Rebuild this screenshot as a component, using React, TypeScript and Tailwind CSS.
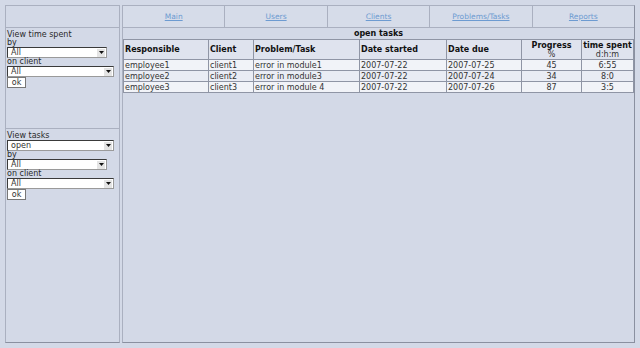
import React from 'react';

const tabs = ['Main', 'Users', 'Clients', 'Problems/Tasks', 'Reports'];

const rows = [
  { who: 'employee1', client: 'client1', task: 'error in module1', start: '2007-07-22', due: '2007-07-25', progress: '45', spent: '6:55' },
  { who: 'employee2', client: 'client2', task: 'error in module3', start: '2007-07-22', due: '2007-07-24', progress: '34', spent: '8:0' },
  { who: 'employee3', client: 'client3', task: 'error in module 4', start: '2007-07-22', due: '2007-07-26', progress: '87', spent: '3:5' },
];

function Select({ value, width }: { value: string; width: string }) {
  return (
    <div className={`flex h-[11px] items-center justify-between border border-[#3a3a3a] border-r-[#9a9a9a] border-b-[#9a9a9a] bg-white pl-[3px] pr-[1px] ${width}`}>
      <span className="leading-none text-[#333]">{value}</span>
      <span className="flex h-[8px] w-[8px] items-center justify-center bg-[#e4e4e4]">
        <svg width="5" height="3" viewBox="0 0 5 3">
          <path d="M0 0h5L2.5 3z" fill="#111" />
        </svg>
      </span>
    </div>
  );
}

function OkButton() {
  return (
    <div className="flex h-[11px] w-[19px] items-center justify-center border border-[#777] bg-white leading-none text-[#333]">
      ok
    </div>
  );
}

export default function App() {
  return (
    <div className="h-[348px] w-[640px] bg-[#d3d9e7] p-[5px] text-[8px] text-[#2a2a2a]" style={{ fontFamily: '"DejaVu Sans", sans-serif' }}>
      <div className="flex h-[338px] gap-[2px]">
        {/* Sidebar */}
        <div className="flex w-[116px] flex-col border border-[#aab0c0] border-b-[#8a90a0]">
          <div className="h-[22px] border-b border-[#aab0c0]" />
          <div className="flex h-[101px] flex-col border-b border-[#aab0c0] pl-[1px] pt-[2px]">
            <span className="leading-[9px]">View time spent</span>
            <span className="leading-[8px]">by</span>
            <Select value="All" width="w-[100px]" />
            <span className="leading-[8px]">on client</span>
            <Select value="All" width="w-[107px]" />
            <OkButton />
          </div>
          <div className="flex flex-col pl-[1px] pt-[3px]">
            <span className="leading-[8px]">View tasks</span>
            <Select value="open" width="w-[107px]" />
            <span className="leading-[8px]">by</span>
            <Select value="All" width="w-[100px]" />
            <span className="leading-[8px]">on client</span>
            <Select value="All" width="w-[107px]" />
            <OkButton />
          </div>
        </div>

        {/* Main */}
        <div className="flex flex-1 flex-col border border-[#aab0c0] border-b-[#8a90a0] border-r-[#8a90a0]">
          <div className="flex h-[22px] border-b border-[#aab0c0]">
            {tabs.map((t, i) => (
              <div
                key={t}
                className={`flex flex-1 items-center justify-center bg-[#d6dce9] ${i > 0 ? 'border-l border-[#aab0c0]' : ''}`}
              >
                <span className="text-[7.5px] text-[#6d9bd1] underline">{t}</span>
              </div>
            ))}
          </div>
          <div className="flex flex-col pt-[1px]">
            <div className="h-[10px] text-center font-bold leading-[10px] text-[#111]">open tasks</div>
            <table className="w-[511px] border-collapse leading-[9px]">
              <thead>
                <tr className="h-[20px] bg-[#dfe3ee] font-bold text-[#111]">
                  <th className="w-[85px] border border-[#8f95a5] pl-[1px] text-left">Responsible</th>
                  <th className="w-[45px] border border-[#8f95a5] pl-[1px] text-left">Client</th>
                  <th className="w-[106px] border border-[#8f95a5] pl-[1px] text-left">Problem/Task</th>
                  <th className="w-[87px] border border-[#8f95a5] pl-[1px] text-left">Date started</th>
                  <th className="w-[75px] border border-[#8f95a5] pl-[1px] text-left">Date due</th>
                  <th className="w-[60px] border border-[#8f95a5] text-center">
                    Progress
                    <br />
                    <span className="font-normal text-[#333]">%</span>
                  </th>
                  <th className="border border-[#8f95a5] text-center">
                    time spent
                    <br />
                    <span className="font-normal text-[#333]">d:h:m</span>
                  </th>
                </tr>
              </thead>
              <tbody className="text-[#333]">
                {rows.map((r, i) => (
                  <tr key={r.who} className={`h-[11px] ${i === 1 ? 'bg-[#e9ecf4]' : 'bg-[#f1f3f8]'}`}>
                    <td className="border border-[#8f95a5] pl-[1px]">{r.who}</td>
                    <td className="border border-[#8f95a5] pl-[1px]">{r.client}</td>
                    <td className="border border-[#8f95a5] pl-[1px]">{r.task}</td>
                    <td className="border border-[#8f95a5] pl-[1px]">{r.start}</td>
                    <td className="border border-[#8f95a5] pl-[1px]">{r.due}</td>
                    <td className="border border-[#8f95a5] text-center">{r.progress}</td>
                    <td className="border border-[#8f95a5] text-center">{r.spent}</td>
                  </tr>
                ))}
              </tbody>
            </table>
          </div>
        </div>
      </div>
    </div>
  );
}
